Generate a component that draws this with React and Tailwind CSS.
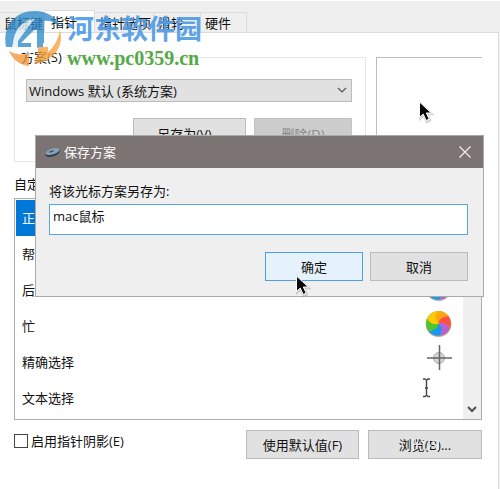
import { useState } from "react";

const tabs = [
	{ name: "鼠标键", width: "w-[45px] pl-1" },
	{ name: "指针", width: "w-[50px] pl-1.5" },
	{ name: "指针选项", width: "w-[59px] pl-1" },
	{ name: "滑轮", width: "w-[47px] pl-1" },
	{ name: "硬件", width: "w-[46px] pl-1" },
];

const cursors = [
	{ name: "正常选择", icon: "arrow" },
	{ name: "帮助选择", icon: "arrow" },
	{ name: "后台运行", icon: "wheel" },
	{ name: "忙", icon: "wheel" },
	{ name: "精确选择", icon: "cross" },
	{ name: "文本选择", icon: "beam" },
];

// Petals of the beach ball, one every 60 degrees
const petals = [
	["#ffa60d", 0],
	["#ff4f45", 60],
	["#b95fd3", 120],
	["#1497f5", 180],
	["#4fc62b", 240],
	["#fccb05", 300],
];

function Arrow({ className }) {
	return (
		<svg
			className={className}
			width="18"
			height="26"
			viewBox="0 0 18 26"
			aria-hidden="true"
		>
			<path
				d="M3 3v16l3.8-3.4 3 6.6 3.4-1.6-3-6.3H15z"
				fill="#888"
				opacity=".35"
				stroke="#888"
				strokeWidth="2"
			/>
			<path
				d="M2.5 2v15.5l3.7-3.4 3 6.4 3-1.4-2.9-6.1h5z"
				fill="#080808"
				stroke="#fff"
				strokeWidth="1"
			/>
		</svg>
	);
}

function CursorIcon({ type }) {
	return (
		<svg
			width="36"
			height="36"
			viewBox="0 0 36 36"
			className="overflow-visible"
			aria-hidden="true"
		>
			{type === "arrow" && <path d="M5 5v18l5-5h7z" fill="#080808" />}
			{type === "wheel" && (
				<>
					<circle cx="17.5" cy="16.5" r="12.7" fill="#777" opacity=".35" />
					<circle cx="17.5" cy="15.7" r="12.8" fill="#999" />
					<g transform="translate(17.5 15.5)">
						<circle r="12.2" fill="#fccb05" />
						{petals.map(([color, angle]) => (
							<path
								key={angle}
								d="M0 0C-4-3-4-9-1-12.2A12.2 12.2 0 0 1 10.1-6.9C6-8 2-5 0 0z"
								fill={color}
								transform={`rotate(${angle})`}
							/>
						))}
					</g>
				</>
			)}
			{type === "cross" && (
				<g fill="none" stroke="#666">
					<circle cx="18" cy="14" r="5.5" fill="#d5d5d5" stroke="#aaa" />
					<path d="M18.5 1v25M6 14h25" strokeWidth="1.5" />
				</g>
			)}
			{type === "beam" && (
				<path
					d="M2-1h2l1.5 1.2L7-1h2M5.5 0v16M2 16.5h2l1.5-1.2L7 16.5h2M4 8h3"
					fill="none"
					stroke="#444"
					strokeWidth="1.4"
				/>
			)}
		</svg>
	);
}

function Watermark() {
	return (
		<div className="pointer-events-none absolute top-[9px] left-[4px] z-10 flex gap-[6px] whitespace-nowrap">
			<svg width="57" height="57" viewBox="0 0 57 57" aria-hidden="true">
				<g opacity=".78">
					<path
						d="M2 37C-2 17 11 1 30 1c13 0 23 6 26 16-5-5-10-7-16-6v22h-7V20h-3L17 33h10v4z"
						fill="#2f8acb"
					/>
					<path
						d="M9 33C10 21 17 11 30 9L14 31v6h13v8h-6v-4H7z"
						fill="#fff"
						opacity=".85"
					/>
					<path d="M33 12l6-2v28h-6z" fill="#2f8acb" />
					<path
						d="M56 20c4 16-5 31-26 34l4-9v-8h10v5c6-5 10-12 12-22z"
						fill="#f6a13a"
					/>
					<path d="M5 41c5 3 11 4 20 3v12C16 55 9 50 5 41z" fill="#f6953a" />
				</g>
			</svg>
			<div>
				<div className="text-[27px] leading-[38px] font-bold text-[#4d9be6] opacity-90">
					河东软件园
				</div>
				<div className="font-['Liberation_Serif',serif] text-[20px] leading-[20px] font-bold text-[#55a945]">
					www.pc0359.cn
				</div>
			</div>
		</div>
	);
}

function Button({ className = "", children, ...props }) {
	return (
		<button
			type="button"
			className={`h-[29px] border leading-[20px] ${className}`}
			{...props}
		>
			{children}
		</button>
	);
}

function SaveDialog() {
	const [name, setName] = useState("mac鼠标");

	return (
		<div
			role="dialog"
			aria-labelledby="dialog-title"
			className="absolute top-[134px] right-4 left-[35px] z-20 border border-[#aaa] bg-[#efefef]"
		>
			<header className="flex h-[32px] items-center bg-[#7b7473] pr-3 pl-2 text-white">
				<svg width="17" height="12" viewBox="0 0 17 12" aria-hidden="true">
					<ellipse
						cx="8.5"
						cy="7"
						rx="7.5"
						ry="3.5"
						fill="#353d46"
						transform="rotate(-18 8.5 7)"
					/>
					<ellipse
						cx="8.5"
						cy="5.5"
						rx="7.2"
						ry="3"
						fill="#83a2b9"
						transform="rotate(-18 8.5 5.5)"
					/>
					<path d="M5.5 6.2l4-1.4" stroke="#303840" strokeWidth="1.2" />
				</svg>
				<h2 id="dialog-title" className="ml-[3px] flex-1">
					保存方案
				</h2>
				<button type="button" aria-label="关闭">
					<svg width="12" height="12" viewBox="0 0 12 12">
						<path d="M.5.5l11 11M11.5.5l-11 11" stroke="#eee" strokeWidth="1.2" />
					</svg>
				</button>
			</header>
			<div className="pt-[13px] pr-[15px] pb-[15px] pl-[13px]">
				<label htmlFor="scheme-name" className="block">
					将该光标方案另存为:
				</label>
				<input
					id="scheme-name"
					value={name}
					onChange={(e) => setName(e.target.value)}
					className="mt-[3px] block h-[31px] w-full border border-[#55a6e4] bg-white px-[3px] pb-[9px] outline-none"
				/>
				<div className="relative mt-[17px] flex justify-end gap-[7px]">
					<Button className="w-[98px] border-[#4ca0e6] bg-[#e5f1fb]">
						确定
					</Button>
					<Button className="w-[98px] border-[#bbb] bg-[#e1e1e1]">取消</Button>
					<Arrow className="absolute top-[22px] right-[156px]" />
				</div>
			</div>
		</div>
	);
}

function App() {
	const [shadow, setShadow] = useState(false);

	return (
		<div className="relative flex min-h-screen flex-col border-t border-white bg-[#efefef] pr-px font-['Open_Sans','Noto_Sans_CJK_SC',sans-serif] text-[13px] leading-[20px] text-[#111]">
			<nav className="mt-[9px] flex h-[22px] items-end" role="tablist">
				{tabs.map((tab, i) => (
					<button
						key={tab.name}
						type="button"
						role="tab"
						aria-selected={i === 1}
						className={`overflow-hidden border-t border-r border-[#dcdcdc] text-left whitespace-nowrap ${tab.width} ${
							i === 1 ? "h-[22px] bg-white" : "h-[20px]"
						}`}
					>
						{tab.name}
					</button>
				))}
			</nav>

			<main className="flex-1 border-t border-r border-[#dcdcdc] bg-white pt-[14px] pr-4 pl-[14px]">
				<div className="flex gap-[10px]">
					<fieldset className="min-w-0 flex-1 border border-[#e6e6e6] pr-[13px] pb-3 pl-[11px]">
						<legend className="ml-[-6px] px-px">方案(S)</legend>
						<div className="relative pt-3">
							<select
								aria-label="方案"
								className="block h-[23px] w-full appearance-none border border-[#bdbdbd] bg-[#e1e1e1] px-[2px] leading-[20px]"
							>
								<option>Windows 默认 (系统方案)</option>
							</select>
							<svg
								className="pointer-events-none absolute top-[20px] right-[5px]"
								width="10"
								height="7"
								viewBox="0 0 10 7"
								aria-hidden="true"
							>
								<path
									d="M1 1l4 4 4-4"
									fill="none"
									stroke="#555"
									strokeWidth="1.2"
								/>
							</svg>
						</div>
						<div className="mt-4 flex h-[31px] justify-end gap-2">
							<Button className="h-full w-[113px] border-[#bbb] bg-[#e1e1e1]">
								另存为(V)...
							</Button>
							<Button
								disabled
								className="h-full w-[98px] border-[#c4c4c4] bg-[#ccc] text-[#888]"
							>
								删除(D)
							</Button>
						</div>
					</fieldset>
					<div className="mt-[10px] w-[106px] border-t border-l border-[#bdbdbd] pt-[42px] pl-[40px]">
						<Arrow />
					</div>
				</div>

				<h3 className="mt-3 mb-1">自定义(C):</h3>
				<div className="flex border border-[#abadb3]">
					<ul role="listbox" className="flex-1 pt-px pb-[3px] pl-px">
						{cursors.map((cursor, i) => (
							<li
								key={cursor.name}
								role="option"
								aria-selected={i === 0}
								className={`flex h-9 items-center justify-between pr-[6px] pl-[6px] ${
									i === 0 ? "bg-[#0078d7] text-white" : ""
								}`}
							>
								{cursor.name}
								<CursorIcon type={cursor.icon} />
							</li>
						))}
					</ul>
					<div className="flex w-[18px] items-end justify-center bg-[#f0f0f0] pb-[6px]">
						<svg width="10" height="7" viewBox="0 0 10 7" aria-hidden="true">
							<path
								d="M1 1l4 4 4-4"
								fill="none"
								stroke="#505050"
								strokeWidth="2"
							/>
						</svg>
					</div>
				</div>

				<div className="mt-[10px] flex">
					<label className="flex h-[21px] flex-1 items-center gap-[3px]">
						<input
							type="checkbox"
							checked={shadow}
							onChange={(e) => setShadow(e.target.checked)}
							className="h-[14px] w-[14px] appearance-none border border-[#444] bg-white checked:bg-[#0078d7]"
						/>
						启用指针阴影(E)
					</label>
					<Button className="w-[113px] border-[#bbb] bg-[#e1e1e1]">
						使用默认值(F)
					</Button>
					<Button className="relative ml-[9px] w-[114px] border-[#bbb] bg-[#e1e1e1]">
						浏览(B)...
						<svg
							className="absolute top-[6px] left-[42px]"
							width="30"
							height="16"
							viewBox="0 0 30 16"
							aria-hidden="true"
						>
							<path
								d="M2 2v12M6 5v7M10 3l3 3M15 13l5-5M22 4l4 8M27 3v10"
								stroke="#eee"
								strokeWidth="2"
								opacity=".85"
							/>
						</svg>
					</Button>
				</div>
			</main>

			<Watermark />
			<SaveDialog />
		</div>
	);
}

export default App;
